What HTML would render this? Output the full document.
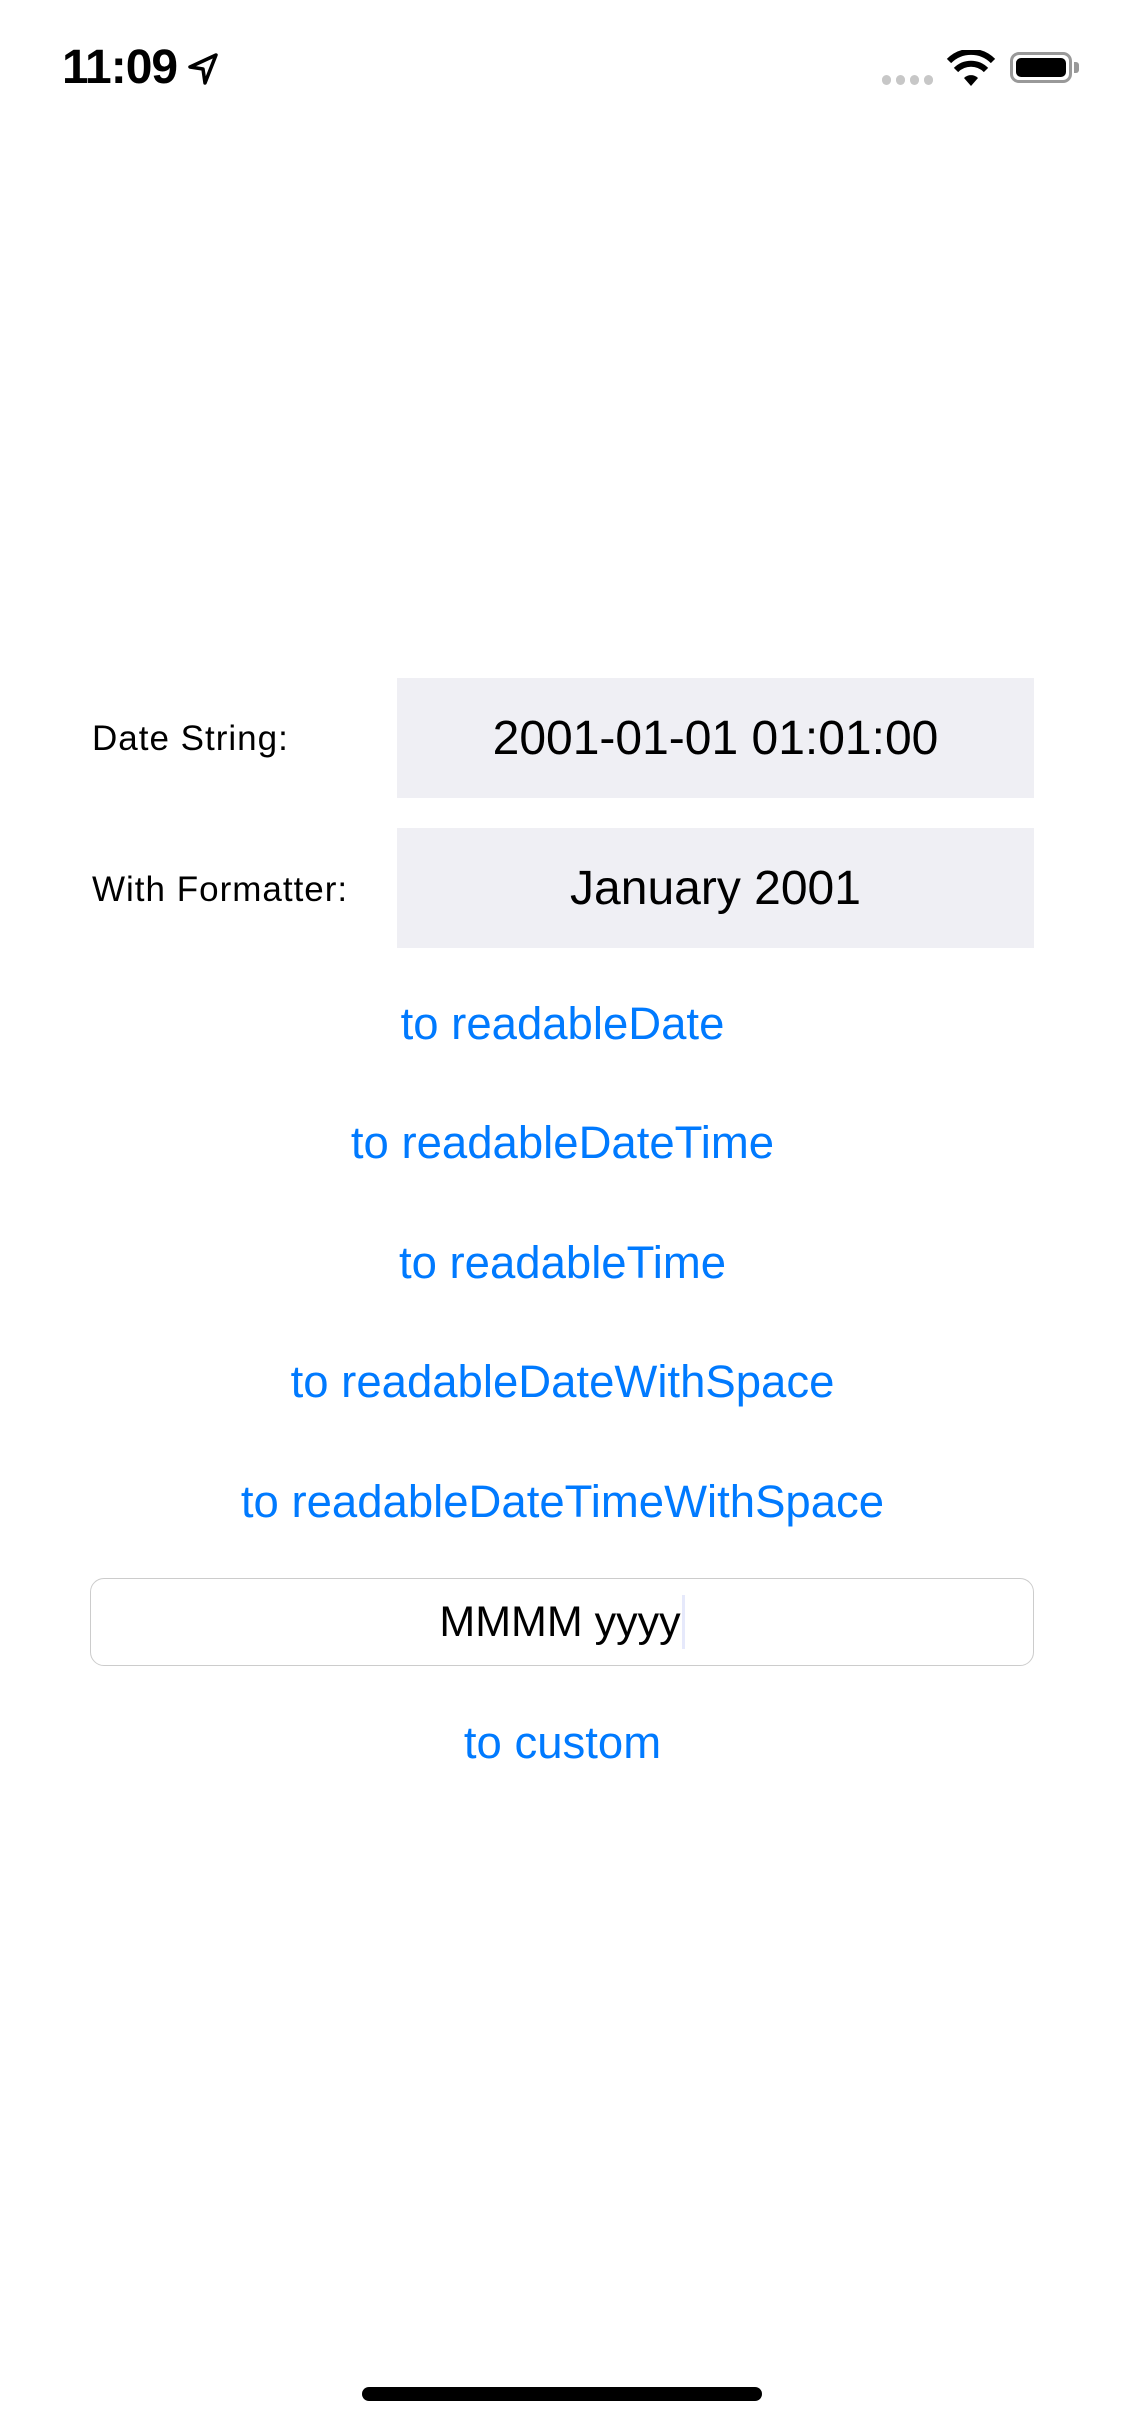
<!DOCTYPE html>
<html><head><meta charset="utf-8"><style>
*{margin:0;padding:0;box-sizing:border-box}
body{width:1125px;height:2436px;background:#fff;position:relative;overflow:hidden;font-family:"Liberation Sans",sans-serif;color:#000}
.abs{position:absolute}
.lbl{position:absolute;left:92px;font-size:35px;line-height:40px;letter-spacing:1px}
.box{position:absolute;left:397px;width:637px;height:120px;background:#efeff4;display:flex;align-items:center;justify-content:center;font-size:48px}
.btn{position:absolute;left:0;width:1125px;text-align:center;color:#007aff;font-size:45.5px;line-height:50px}
</style></head><body>
<div class="abs" style="left:62px;top:40px;font-size:48px;font-weight:bold;line-height:56px;letter-spacing:-1px">11:09</div>
<svg class="abs" style="left:186px;top:52px" width="34" height="34" viewBox="0 0 34 34"><path d="M30 3 L4 15 L17 17 L19 31 Z" fill="none" stroke="#000" stroke-width="3.5" stroke-linejoin="round"/></svg>
<div class="abs" style="left:882px;top:75px;display:flex;gap:5px">
<span style="width:9px;height:10px;border-radius:5px;background:#c7c7c7"></span><span style="width:9px;height:10px;border-radius:5px;background:#c7c7c7"></span><span style="width:9px;height:10px;border-radius:5px;background:#c7c7c7"></span><span style="width:9px;height:10px;border-radius:5px;background:#c7c7c7"></span></div>
<svg class="abs" style="left:946px;top:50px" width="50" height="38" viewBox="0 0 50 38"><path d="M25 36 L18 28 A10 10 0 0 1 32 28 Z" fill="#000"/><path d="M10 20 A21 21 0 0 1 40 20" fill="none" stroke="#000" stroke-width="6"/><path d="M3 11 A31 31 0 0 1 47 11" fill="none" stroke="#000" stroke-width="6"/></svg>
<div class="abs" style="left:1010px;top:52px;width:62px;height:31px;border:3px solid #999;border-radius:9px;padding:3px"><div style="width:100%;height:100%;background:#000;border-radius:5px"></div></div>
<div class="abs" style="left:1074px;top:62px;width:5px;height:11px;background:#999;border-radius:0 3px 3px 0"></div>
<div class="lbl" style="top:719px">Date String:</div>
<div class="box" style="top:678px">2001-01-01 01:01:00</div>
<div class="lbl" style="top:870px">With Formatter:</div>
<div class="box" style="top:828px">January 2001</div>
<div class="btn" style="top:999px">to readableDate</div>
<div class="btn" style="top:1118px">to readableDateTime</div>
<div class="btn" style="top:1238px">to readableTime</div>
<div class="btn" style="top:1357px">to readableDateWithSpace</div>
<div class="btn" style="top:1477px">to readableDateTimeWithSpace</div>
<div class="abs" style="left:90px;top:1578px;width:944px;height:88px;border:1.5px solid #ccc;border-radius:14px;display:flex;align-items:center;justify-content:center;font-size:43px">MMMM yyyy<span style="display:inline-block;width:3px;height:54px;background:#e6e9fb;margin-left:1px"></span></div>
<div class="btn" style="top:1718px">to custom</div>
<div class="abs" style="left:362px;top:2387px;width:400px;height:14px;border-radius:7px;background:#000"></div>
</body></html>
